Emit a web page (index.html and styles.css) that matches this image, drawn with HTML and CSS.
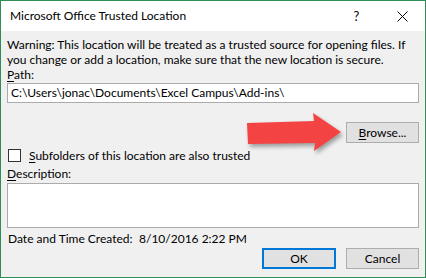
FILE: index.html
```html
<!DOCTYPE html>
<html>
<head>
<meta charset="utf-8" />
<title>Microsoft Office Trusted Location</title>
<link rel="stylesheet" href="styles.css">
</head>
<body>
	<div class="window">
		<div class="titlebar">
			<span class="title">Microsoft Office Trusted Location</span>
			<span class="help">?</span>
			<svg class="close" width="11" height="11" viewBox="0 0 11 11">
				<path d="M0.5 0.5 L10.5 10.5 M10.5 0.5 L0.5 10.5" stroke="#000" stroke-width="1" fill="none" />
			</svg>
		</div>
		<div class="content">
			<p class="warning">Warning: This location will be treated as a trusted source for opening files. If<br>you change or add a location, make sure that the new location is secure.</p>
			<div class="label"><u>P</u>ath:</div>
			<div class="field">C:\Users\jonac\Documents\Excel Campus\Add-ins\</div>
			<div class="browse-row">
				<button class="btn"><u>B</u>rowse...</button>
			</div>
			<div class="check-row">
				<span class="checkbox"></span>
				<span><u>S</u>ubfolders of this location are also trusted</span>
			</div>
			<div class="label desc-label"><u>D</u>escription:</div>
			<div class="field area"></div>
			<div class="created">
				<span class="created-name">Date and Time Created:</span>
				<span>8/10/2016 2:22 PM</span>
			</div>
			<div class="actions">
				<button class="btn btn-default">OK</button>
				<button class="btn">Cancel</button>
			</div>
		</div>
		<!-- red callout arrow pasted over the dialog -->
		<svg class="arrow" width="120" height="50" viewBox="240 108 120 50">
			<polygon points="247,123 314,121 313,113 341,132 314,151 315,143 248,144" fill="#f44343" />
		</svg>
	</div>
</body>
</html>
```

FILE: styles.css
```css
body, p, div {margin:0; padding:0;}
body {background:#fff; font-family:"Lato", "Noto Sans", sans-serif; font-size:12px; color:#000;}
u {text-decoration:underline; text-underline-offset:2px;}

.window {width:426px; height:278px; box-sizing:border-box; border:1px solid #2d8f55; display:flex; flex-direction:column; position:relative; background:#f0f0f0;}

.titlebar {height:30px; background:#fff; display:flex; align-items:center; padding-left:9px; flex-shrink:0; font-size:12px;}
.title {line-height:16px; white-space:nowrap;}
.help {margin-left:auto; width:13px; text-align:center; margin-right:34px; font-size:13px;}
.close {margin-right:17px; display:block;}

.content {flex:1; padding:6px 6px 0 6px; display:flex; flex-direction:column; line-height:15px;}
.warning {height:30px; white-space:nowrap;}
.label {height:15px;}
.field {margin-top:1px; height:20px; box-sizing:border-box; border:1px solid #ababab; background:#fff; padding:0 3px; line-height:18px; white-space:nowrap;}

.browse-row {margin-top:19px; display:flex; justify-content:flex-end;}
.btn {width:73px; height:21px; box-sizing:border-box; border:1px solid #adadad; background:#e1e1e1; font:inherit; line-height:17px; padding:0; color:#000;}
.btn-default {border:2px solid #0078d7; width:74px;}

.check-row {margin-top:5px; height:15px; display:flex; align-items:center; gap:8px; white-space:nowrap;}
.checkbox {width:13px; height:13px; box-sizing:border-box; border:1px solid #333; background:#fff; margin-left:1px;}

.desc-label {margin-top:3px;}
.area {margin-top:2px; height:45px;}

.created {margin-top:3px; height:15px; display:flex; white-space:nowrap;}
.created-name {flex:none; width:131px; padding-left:1px;}

.actions {margin-top:2px; display:flex; justify-content:flex-end; gap:10px;}

.arrow {position:absolute; left:239px; top:107px; filter:drop-shadow(2px 3px 2px rgba(0,0,0,0.35));}
```
